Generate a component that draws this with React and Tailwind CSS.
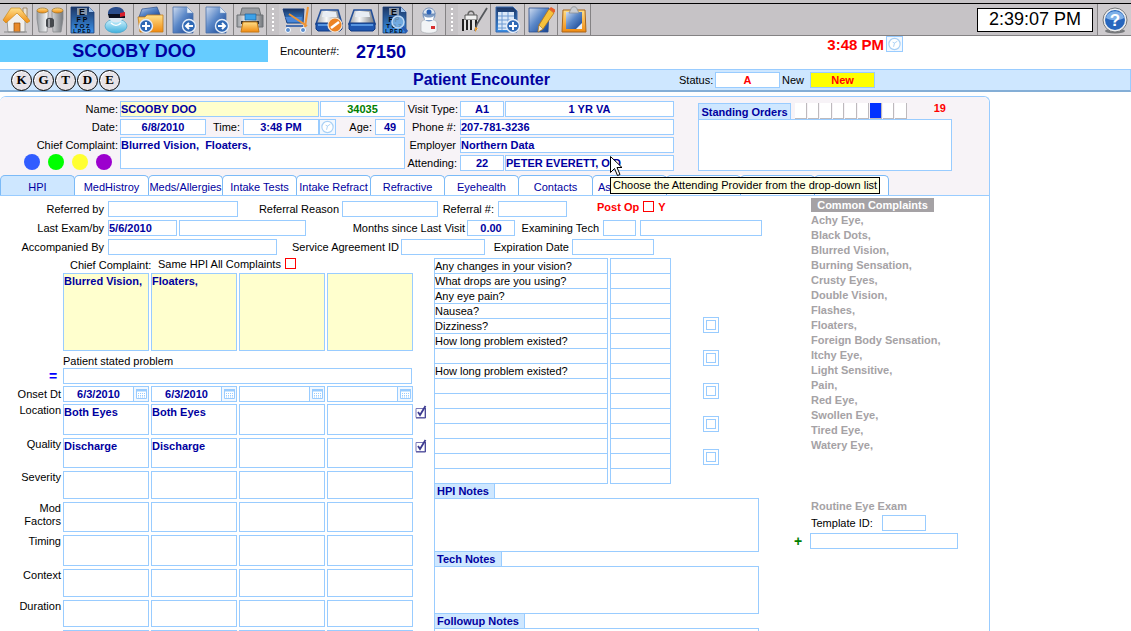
import { useState } from 'react';

const HISTORY_ROWS = [
  { label: 'Location', height: 'h-[31px]', values: ['Both Eyes', 'Both Eyes', '', ''], checked: true },
  { label: 'Quality', height: 'h-[30px]', values: ['Discharge', 'Discharge', '', ''], checked: true },
  { label: 'Severity', height: 'h-[28px]', values: ['', '', '', ''] },
  { label: 'Mod Factors', height: 'h-[30px]', values: ['', '', '', ''] },
  { label: 'Timing', height: 'h-[31px]', values: ['', '', '', ''] },
  { label: 'Context', height: 'h-[28px]', values: ['', '', '', ''] },
  { label: 'Duration', height: 'h-[27px]', values: ['', '', '', ''] },
  { label: '', height: 'h-[27px]', values: ['', '', '', ''] },
];

const QUESTIONS = [
  'Any changes in your vision?',
  'What drops are you using?',
  'Any eye pain?',
  'Nausea?',
  'Dizziness?',
  'How long problem existed?',
  '',
  'How long problem existed?',
  '', '', '', '', '', '', '',
];

const COMPLAINTS = [
  'Achy Eye,', 'Black Dots,', 'Blurred Vision,', 'Burning Sensation,', 'Crusty Eyes,',
  'Double Vision,', 'Flashes,', 'Floaters,', 'Foreign Body Sensation,', 'Itchy Eye,',
  'Light Sensitive,', 'Pain,', 'Red Eye,', 'Swollen Eye,', 'Tired Eye,', 'Watery Eye,',
];

const TABS = [
  'HPI', 'MedHistroy', 'Meds/Allergies', 'Intake Tests', 'Intake Refract', 'Refractive',
  'Eyehealth', 'Contacts', 'As', '', '', '',
];

const BOX = 'border border-[#99ccff] text-[11px] font-bold text-[#0000a0] outline-none';

/* ---------- form pieces ---------- */

function Field({ id, label, value = '', className = '' }) {
  return (
    <input
      id={id}
      aria-label={label}
      defaultValue={value}
      className={`${BOX} block h-4 min-w-0 shrink-0 ${className}`}
    />
  );
}

function Area({ id, label, value = '', className = '' }) {
  return (
    <textarea
      id={id}
      aria-label={label}
      defaultValue={value}
      className={`${BOX} block resize-none overflow-hidden leading-[14px] ${className}`}
    />
  );
}

function Label({ htmlFor, className = '', children }) {
  return (
    <label htmlFor={htmlFor} className={`block shrink-0 whitespace-nowrap leading-4 ${className}`}>
      {children}
    </label>
  );
}

/* ---------- icons ---------- */

function Gradients() {
  return (
    <svg className="absolute h-0 w-0" aria-hidden="true">
      <defs>
        <linearGradient id="blue" x1="0" y1="0" x2="1" y2="1">
          <stop offset="0" stopColor="#cfdcf0" />
          <stop offset="0.45" stopColor="#5b88c8" />
          <stop offset="1" stopColor="#12408f" />
        </linearGradient>
        <linearGradient id="navy" x1="0" y1="0" x2="0" y2="1">
          <stop offset="0" stopColor="#1c3563" />
          <stop offset="1" stopColor="#3a92ea" />
        </linearGradient>
        <linearGradient id="orange" x1="0" y1="0" x2="0" y2="1">
          <stop offset="0" stopColor="#ffe08a" />
          <stop offset="1" stopColor="#f08a10" />
        </linearGradient>
        <linearGradient id="steel" x1="0" y1="0" x2="1" y2="0">
          <stop offset="0" stopColor="#9a9ea3" />
          <stop offset="0.4" stopColor="#f8f9fa" />
          <stop offset="1" stopColor="#74787d" />
        </linearGradient>
        <linearGradient id="sky" x1="0" y1="0" x2="0" y2="1">
          <stop offset="0" stopColor="#d8f5ff" />
          <stop offset="1" stopColor="#3fb0dc" />
        </linearGradient>
      </defs>
    </svg>
  );
}

function Icon({ children }) {
  return (
    <svg viewBox="0 0 28 28" className="h-7 w-7 shrink-0" aria-hidden="true">
      {children}
    </svg>
  );
}

const Page = () => (
  <g>
    <path d="M4 1h14l6 6v20H4z" fill="url(#blue)" stroke="#4a6ea8" strokeWidth="0.8" />
    <path d="M18 1v6h6z" fill="#e4edf8" stroke="#7f9cc8" strokeWidth="0.5" />
  </g>
);

const Chart = () => (
  <g>
    <path d="M2 1h18l5 5v21H2z" fill="url(#navy)" stroke="#1b3d7a" strokeWidth="0.8" />
    <path d="M20 1v5h5z" fill="#9fc3ee" />
    <path d="M8 2h10v7H8z" fill="#8795a8" />
    <g fill="#03060f" fontFamily="Liberation Sans" fontWeight="bold" textAnchor="middle">
      <text x="13" y="9" fontSize="9">E</text>
      <text x="13" y="16" fontSize="7">F P</text>
      <text x="13" y="22" fontSize="6">T O Z</text>
      <text x="13" y="27" fontSize="5">L P E D</text>
    </g>
  </g>
);

const Badge = ({ children, x = 19, y = 19 }) => (
  <g transform={`translate(${x} ${y})`}>
    <circle r="6.5" fill="#2f69b5" stroke="#e6eef9" strokeWidth="1.4" />
    <g stroke="#fff" strokeWidth="2" fill="none">{children}</g>
  </g>
);

const Drive = () => (
  <g>
    <path d="M6 4h17l4 14H1z" fill="url(#steel)" stroke="#24509a" strokeWidth="1.6" />
    <path d="M8 6h13l1 5H7z" fill="#e8edf4" />
    <path d="M1 17h26v6l-2 2H3l-2-2z" fill="#1f57b0" stroke="#123a80" />
    <path d="M3 19h22" stroke="#69a8f0" strokeWidth="1.5" />
  </g>
);

const ICONS = {
  Home: (
    <Icon>
      <path d="M21 2h4v9h-4z" fill="#e9e2d8" stroke="#8a6b40" strokeWidth="0.7" />
      <path d="M5 13 14 5l9 9v12H6z" fill="#f1efec" stroke="#8b8b8b" strokeWidth="0.8" />
      <path d="M1 14 9 2h9l10 13-3 2L15 7 4 17z" fill="url(#orange)" stroke="#c98a1a" strokeWidth="0.7" />
      <path d="M12 17h6v9h-6z" fill="#e8892a" stroke="#8a4a10" strokeWidth="0.7" />
      <path d="M2 26h23" stroke="#8a8a8a" />
    </Icon>
  ),
  Search: (
    <Icon>
      <path d="M1 5h11v5l-1 16H3L1 13zM16 5h11v8l-2 13h-8l-1-16z" fill="url(#steel)" stroke="#85888c" strokeWidth="0.8" />
      <path d="M10 14c1-3 7-3 8 0v6c-1 2-7 2-8 0z" fill="#44484d" />
      <path d="M13 13v8" stroke="#b8bbc0" strokeWidth="1.5" />
      <ellipse cx="6.5" cy="4.5" rx="5.500" ry="2.500" fill="url(#orange)" stroke="#9c7125" strokeWidth="0.7" />
      <ellipse cx="21.5" cy="4.5" rx="5.500" ry="2.500" fill="url(#orange)" stroke="#9c7125" strokeWidth="0.7" />
    </Icon>
  ),
  'Eye chart': <Icon><Chart /></Icon>,
  Patient: (
    <Icon>
      <ellipse cx="14" cy="20" rx="11" ry="7" fill="url(#sky)" stroke="#4aa3c8" strokeWidth="0.7" />
      <circle cx="14" cy="9" r="7.500" fill="#dce8f2" />
      <path d="M6 9c-1-7 5-8 9-8s8 3 7 7z" fill="#2a4d8c" />
      <path d="M6 8h17v4H7z" fill="#0b1020" />
      <path d="m18 7 5-1v4l-5 1z" fill="#d81e2c" />
      <path d="M9 17c3 3 7 3 10 0" stroke="#fff" strokeWidth="1.5" fill="none" />
    </Icon>
  ),
  'New file': (
    <Icon>
      <path d="m6 3 15-2 4 10H3z" fill="url(#blue)" stroke="#2b4f8e" strokeWidth="0.7" />
      <path d="M2 11h7l2-2h16v17H4z" fill="url(#orange)" stroke="#c47b18" strokeWidth="0.8" />
      <Badge x={10} y={20}><path d="M-4 0h8M0-4v8" /></Badge>
    </Icon>
  ),
  Previous: <Icon><Page /><Badge x={20} y={20}><path d="M4 0h-7M0-3-3 0 0 3" /></Badge></Icon>,
  Next: <Icon><Page /><Badge x={20} y={20}><path d="M-4 0h7M0-3 3 0 0 3" /></Badge></Icon>,
  Print: (
    <Icon>
      <path d="M6 2h17l2 8H4z" fill="#9a9da2" stroke="#6e7175" />
      <path d="M1 9h26v12H1z" fill="url(#steel)" stroke="#6d7074" />
      <path d="M9 8h11v6H9z" fill="#3da2e8" stroke="#1c5f9c" strokeWidth="0.7" />
      <path d="M5 15h18v3H5z" fill="#33363a" />
      <path d="M7 16h14l2 10H5z" fill="url(#orange)" stroke="#c47b18" />
    </Icon>
  ),
  Cart: (
    <Icon>
      <path d="M2 3h21l-1 14H6z" fill="url(#navy)" stroke="#1d3e7c" />
      <path d="M4 11h17l-1 5H7z" fill="#4a86d8" />
      <path d="m8 8 18 12M27 1l-3 20" stroke="#ef9433" strokeWidth="2" />
      <path d="M5 20h17" stroke="#4a6fae" strokeWidth="2" />
      <circle cx="7" cy="24" r="2.500" fill="#5c8fd0" stroke="#fff" />
      <circle cx="22" cy="24" r="2.500" fill="#5c8fd0" stroke="#fff" />
    </Icon>
  ),
  'Clear disk': (
    <Icon>
      <Drive />
      <circle cx="20" cy="19" r="7" fill="#ec8324" stroke="#f6e7d4" strokeWidth="1.2" />
      <path d="m16 22 8-6" stroke="#fff" strokeWidth="2.500" />
    </Icon>
  ),
  Disk: <Icon><Drive /></Icon>,
  'Search chart': (
    <Icon>
      <Chart />
      <path d="m21 20 5 6" stroke="#2a5bb0" strokeWidth="3" />
      <circle cx="17" cy="16" r="6" fill="#8fc4f4" fillOpacity="0.7" stroke="#bcd8f5" strokeWidth="1.5" />
    </Icon>
  ),
  Doctor: (
    <Icon>
      <path d="M6 17c0-5 16-5 16 0v8c-3 3-13 3-16 0z" fill="#f2f4f6" stroke="#a9adb3" strokeWidth="0.7" />
      <circle cx="14" cy="9" r="6.500" fill="#7f9cc4" />
      <path d="M8 8c0-8 12-8 12 0z" fill="#dfe7f0" stroke="#5577aa" strokeWidth="0.7" />
      <circle cx="14" cy="6" r="2.500" fill="#2a62b8" />
      <path d="M9 10c3 2 7 2 10 0l-1 4h-8z" fill="#fff" />
      <path d="M16 20h4v3h-4z" fill="#d83030" />
    </Icon>
  ),
  Tools: (
    <Icon>
      <path d="M5 9h12v5H5z" fill="#f2f2f2" stroke="#555" />
      <path d="M8 9c0-5 6-5 6 0" fill="none" stroke="#666" strokeWidth="1.5" />
      <path d="M3 14h15v10H3z" fill="#e2e2e2" />
      <path d="M3 13v12M7 14v10M11 14v10M16 14v10" stroke="#222" strokeWidth="2" />
      <path d="M27 2 17 18l-2 7" stroke="#55585c" strokeWidth="1.800" fill="none" />
      <path d="m15 21 3 1-3 4z" fill="#f0a030" />
    </Icon>
  ),
  'New sheet': (
    <Icon>
      <path d="M3 1h17l4 4v21H3z" fill="url(#navy)" stroke="#3668ae" />
      <path d="M5 6h16v18H5z" fill="#dbe9f8" />
      <path d="M5 10h16M5 14h16M5 18h16M5 22h16M9 6v18M15 6v18" stroke="#6d9ad2" />
      <Badge x={20} y={20}><path d="M-4 0h8M0-4v8" /></Badge>
    </Icon>
  ),
  'Edit note': (
    <Icon>
      <path d="M2 2h20l-1 24H2z" fill="url(#blue)" stroke="#2b4f8e" strokeWidth="0.8" />
      <path d="m22 3 5 4-11 16-5 3 1-7z" fill="#f7c23c" stroke="#b97512" strokeWidth="0.8" />
      <path d="m22 3 2-2 5 3-2 3z" fill="#e8602c" />
      <path d="m12 19 4 4-5 3z" fill="#f6ead0" stroke="#8a6020" strokeWidth="0.5" />
    </Icon>
  ),
  Clipboard: (
    <Icon>
      <path d="M3 4h22l1 22H2z" fill="url(#orange)" stroke="#a9651a" />
      <path d="M6 6h16v17H6z" fill="url(#blue)" />
      <path d="m16 23 6-6v6z" fill="#e8f1fb" />
      <path d="M11 3c0-3 6-3 6 0l2 4H9z" fill="#c9ccd1" stroke="#8c9096" strokeWidth="0.8" />
    </Icon>
  ),
};

const TOOL_GROUPS = [
  { width: 'w-[267px] grid-cols-8', names: ['Home', 'Search', 'Eye chart', 'Patient', 'New file', 'Previous', 'Next', 'Print'] },
  { width: 'w-[167px] grid-cols-5', names: ['Cart', 'Clear disk', 'Disk', 'Search chart', 'Doctor'] },
  { width: 'w-[133px] grid-cols-4', names: ['Tools', 'New sheet', 'Edit note', 'Clipboard'] },
];

function ClockIcon() {
  return (
    <svg viewBox="0 0 16 16" className="h-4 w-4" aria-hidden="true">
      <circle cx="8" cy="8" r="6" fill="#fff" stroke="#a9d0f5" strokeWidth="1.2" />
      <path d="m7 11 1-4 3-2M8 7 6 6" fill="none" stroke="#a9d0f5" />
    </svg>
  );
}

function ClockButton({ label }) {
  return (
    <button
      type="button"
      aria-label={label}
      className="flex h-4 w-[17px] shrink-0 items-center justify-center border border-[#99ccff] bg-[#f2f8ff]"
    >
      <ClockIcon />
    </button>
  );
}

function CalendarIcon() {
  return (
    <svg viewBox="0 0 11 10" className="h-[10px] w-[11px]" aria-hidden="true">
      <path d="M0.500 0.500h10v9h-10z" fill="#fff" stroke="#99ccff" />
      <path d="M0 0h11v2.500H0z" fill="#99ccff" />
      <path d="M2 4.500h7M2 6.500h7M2 8h7" stroke="#99ccff" strokeDasharray="1 1" />
    </svg>
  );
}

function TickIcon() {
  return (
    <svg viewBox="0 0 12 14" className="h-[14px] w-3" aria-hidden="true">
      <path d="M1 3.500h9v9H1z" fill="#fff" stroke="#7a78b8" />
      <path d="M10.500 3v10H1" fill="none" stroke="#4c4a98" />
      <path d="m3 7 2 3 5.500-9" fill="none" stroke="#3c3a90" strokeWidth="1.800" />
    </svg>
  );
}

/* ---------- sections ---------- */

function Toolbar() {
  return (
    <header className="border-t-3 border-[#c6c3c6] bg-[#c6c3c6]">
      <div className="flex h-[33px] items-stretch border-t border-b border-t-black border-b-[#848284]">
        {TOOL_GROUPS.map((group, i) => (
          <div key={group.width} className="flex">
            {i > 0 && (
              <div className="flex w-3 justify-center py-1">
                <span className="border-l-2 border-dotted border-white" />
              </div>
            )}
            <div className={`grid ${group.width}`}>
              {group.names.map((name) => (
                <button
                  key={name}
                  type="button"
                  aria-label={name}
                  className="flex items-center justify-center overflow-hidden border-r border-[#848284] bg-[#cecbce]"
                >
                  {ICONS[name]}
                </button>
              ))}
            </div>
          </div>
        ))}
        <div className="flex flex-1 items-center justify-end pr-1">
          <time className="flex h-6 w-[116px] items-center justify-center border border-black bg-white text-[18px] text-black">
            2:39:07 PM
          </time>
        </div>
        <button
          type="button"
          aria-label="Help"
          className="flex w-[34px] items-center justify-center border-l border-[#848284] bg-[#cecbce]"
        >
          <Icon>
            <ellipse cx="14" cy="25" rx="10" ry="2.500" fill="#77797c" />
            <circle cx="14" cy="14" r="12" fill="#eceef0" stroke="#77797c" />
            <circle cx="14" cy="14" r="10" fill="#2766bd" />
            <path d="M5 12c1-9 17-9 18 0-5 3-13 3-18 0z" fill="#7fb0e8" />
            <text x="14" y="20" fontSize="17" fontWeight="bold" fill="#fff" textAnchor="middle" fontFamily="Liberation Sans">?</text>
          </Icon>
        </button>
      </div>
    </header>
  );
}

function PatientStrip() {
  return (
    <div className="flex h-[33px] items-start">
      <h1 className="mt-1 h-[22px] w-[268px] bg-[#66ccff] text-center text-[18px] leading-[22px] font-bold text-[#0000a0]">
        SCOOBY DOO
      </h1>
      <span className="mt-1 w-[88px] pl-3 leading-[22px]">Encounter#:</span>
      <span className="mt-1 text-[18px] leading-6 font-bold text-[#0000a0]">27150</span>
      <div className="flex flex-1 justify-end pr-[228px]">
        <span className="pr-[2px] text-[15px] leading-[18px] font-bold text-[#ff0000]">3:48 PM</span>
        <ClockButton label="Set time" />
      </div>
    </div>
  );
}

function EncounterBar() {
  return (
    <div className="flex h-[23px] items-center border-t border-r border-b-2 border-[#99ccff] border-b-[#84aed6] bg-[#cee7ff]">
      <div className="flex w-[413px] gap-px pl-[11px]">
        {['K', 'G', 'T', 'D', 'E'].map((letter) => (
          <button
            key={letter}
            type="button"
            className="h-[21px] w-[21px] rounded-full border border-black bg-[#e7e3e7] font-['Liberation_Serif',serif] text-[13px] leading-[18px] font-bold text-black shadow-[inset_1px_1px_1px_#fff]"
          >
            {letter}
          </button>
        ))}
      </div>
      <h2 className="w-[266px] text-[16px] leading-5 font-bold text-[#0000a0]">Patient Encounter</h2>
      <Label htmlFor="status" className="w-9">Status:</Label>
      <Field id="status" value="A" className="w-[65px] bg-white text-center text-[#ff0000]" />
      <Label htmlFor="status-new" className="w-[30px] pl-[2px]">New</Label>
      <Field id="status-new" value="New" className="w-[65px] bg-[#ffff00] text-center text-[#ff0000]" />
    </div>
  );
}

function Tooltip() {
  return (
    <>
      <div
        role="tooltip"
        className="absolute top-[22px] left-[105px] z-10 border border-black bg-[#ffffe1] px-[2px] leading-[15px] whitespace-nowrap text-black"
      >
        Choose the Attending Provider from the drop-down list
      </div>
      <svg viewBox="0 0 12 21" className="absolute top-px left-[105px] z-20 h-[21px] w-3" aria-hidden="true">
        <path d="M0.500 0.500v16l4-4 3 7 2.500-1-3-7h5z" fill="#fff" stroke="#000" />
      </svg>
    </>
  );
}

function PatientPanel() {
  return (
    <div className="flex px-0 pt-1 pb-1">
      <div className="w-[405px] shrink-0">
        <div className="flex flex-col gap-[2px]">
          <div className="flex">
            <Label htmlFor="name" className="w-[120px] pr-[2px] text-right">Name:</Label>
            <Field id="name" value="SCOOBY DOO" className="mr-px w-[199px] bg-[#ffffcc]" />
            <Field label="Patient number" value="34035" className="w-[85px] bg-white text-center text-[#008000]" />
          </div>
          <div className="flex">
            <Label htmlFor="date" className="w-[120px] pr-[2px] text-right">Date:</Label>
            <Field id="date" value="6/8/2010" className="w-[86px] bg-white text-center" />
            <Label htmlFor="time" className="w-[37px] pr-[3px] text-right">Time:</Label>
            <Field id="time" value="3:48 PM" className="w-[76px] bg-white text-center" />
            <ClockButton label="Pick visit time" />
            <Label htmlFor="age" className="w-[39px] pr-[3px] text-right">Age:</Label>
            <Field id="age" value="49" className="w-[30px] bg-white text-center" />
          </div>
          <div className="flex">
            <div className="w-[120px]">
              <Label htmlFor="chief" className="pr-[2px] text-right">Chief Complaint:</Label>
              <div className="flex gap-2 pt-px pl-6">
                <span className="h-4 w-4 rounded-full bg-[#315dff]" />
                <span className="h-4 w-4 rounded-full bg-[#00ff00]" />
                <span className="h-4 w-4 rounded-full bg-[#ffff31]" />
                <span className="h-4 w-4 rounded-full bg-[#9c00ce]" />
              </div>
            </div>
            <Area id="chief" value="Blurred Vision,  Floaters," className="h-8 w-[285px] bg-white" />
          </div>
        </div>
      </div>

      <div className="flex w-[269px] shrink-0 flex-col gap-[2px]">
        <div className="flex">
          <Label htmlFor="visit" className="w-[55px] pr-[2px] text-right">Visit Type:</Label>
          <Field id="visit" value="A1" className="mr-px w-11 bg-white text-center" />
          <Field label="Visit description" value="1 YR VA" className="w-[169px] bg-white text-center" />
        </div>
        <div className="flex">
          <Label htmlFor="phone" className="w-[55px] pr-[4px] text-right">Phone #:</Label>
          <Field id="phone" value="207-781-3236" className="w-[214px] bg-white" />
        </div>
        <div className="flex">
          <Label htmlFor="employer" className="w-[55px] pr-[4px] text-right">Employer</Label>
          <Field id="employer" value="Northern Data" className="w-[214px] bg-white" />
        </div>
        <div className="flex">
          <Label htmlFor="attending" className="w-[55px] pr-[3px] text-right">Attending:</Label>
          <Field id="attending" value="22" className="mr-px w-11 bg-white text-center" />
          <div className="relative">
            <Field label="Attending provider" value="PETER EVERETT, O.D" className="w-[169px] bg-white" />
            <Tooltip />
          </div>
        </div>
      </div>

      <div className="ml-6 w-[254px] pt-[2px]">
        <div className="flex h-4">
          <label
            htmlFor="orders"
            className="mr-1 w-[93px] border border-b-0 border-[#99ccff] bg-[#cee7ff] text-center leading-4 font-bold whitespace-nowrap text-[#0000a0]"
          >
            Standing Orders
          </label>
          <div className="grid w-[113px] grid-cols-9">
            {[0, 1, 2, 3, 4, 5, 6, 7, 8].map((n) => (
              <button
                key={n}
                type="button"
                aria-label={`Order ${n + 1}`}
                className={`mr-px border-r border-b border-[#bdbabd] ${n === 6 ? 'bg-[#0031ff]' : 'bg-white'}`}
              />
            ))}
          </div>
          <span className="flex-1 pr-[6px] text-right leading-[11px] font-bold text-[#ff0000]">19</span>
        </div>
        <Area id="orders" className="h-[52px] w-full bg-white" />
      </div>
    </div>
  );
}

function Tabs() {
  const [active, setActive] = useState(0);
  return (
    <div role="tablist" className="flex h-[21px] border-b border-[#99ccff]">
      {TABS.map((tab, i) => (
        <button
          key={i}
          type="button"
          role="tab"
          aria-selected={i === active}
          onClick={() => setActive(i)}
          className={`-mr-px w-[75px] shrink-0 overflow-hidden rounded-t-[5px] border border-b-0 border-[#7bbaf7] pt-[3px] text-center leading-4 whitespace-nowrap text-[#0000a0] ${
            i === active ? 'bg-[#cee7ff]' : 'bg-white'
          } ${i === 8 ? 'pl-[5px] text-left' : ''}`}
        >
          {tab}
        </button>
      ))}
    </div>
  );
}

function VisitFields() {
  return (
    <div className="flex flex-col gap-[3px] pt-[5px]">
      <div className="flex">
        <Label htmlFor="referred" className="w-[108px] pr-1 text-right">Referred by</Label>
        <Field id="referred" className="w-[130px]" />
        <Label htmlFor="reason" className="w-[104px] pr-[3px] text-right">Referral Reason</Label>
        <Field id="reason" className="w-24" />
        <Label htmlFor="referral" className="w-[60px] pr-1 text-right">Referral #:</Label>
        <Field id="referral" className="w-[69px]" />
        <label className="flex items-start pl-[30px] leading-3 font-bold text-[#ff0000]">
          Post Op
          <input type="checkbox" className="mx-1 h-[11px] w-[11px] appearance-none border border-[#ff0000] bg-white" />
          Y
        </label>
      </div>
      <div className="flex">
        <Label htmlFor="last" className="w-[108px] pr-1 text-right">Last Exam/by</Label>
        <Field id="last" value="5/6/2010" className="mr-[2px] w-[69px]" />
        <Field label="Last exam by" className="w-[127px]" />
        <Label htmlFor="months" className="w-[161px] pr-[2px] text-right">Months since Last Visit</Label>
        <Field id="months" value="0.00" className="w-12 text-center" />
        <Label htmlFor="tech" className="w-[88px] pr-1 text-right">Examining Tech</Label>
        <Field id="tech" className="mr-1 w-[33px]" />
        <Field label="Examining tech name" className="w-[122px]" />
      </div>
      <div className="flex">
        <Label htmlFor="accompanied" className="w-[108px] pr-1 text-right">Accompanied By</Label>
        <Field id="accompanied" className="w-[169px]" />
        <Label htmlFor="agreement" className="w-[124px] pr-[2px] text-right">Service Agreement ID</Label>
        <Field id="agreement" className="w-[84px]" />
        <Label htmlFor="expiration" className="w-[87px] pr-[3px] text-right">Expiration Date</Label>
        <Field id="expiration" className="w-[82px]" />
      </div>
    </div>
  );
}

function HistoryGrid() {
  const complaints = ['Blurred Vision,', 'Floaters,', '', ''];
  const onset = ['6/3/2010', '6/3/2010', '', ''];
  return (
    <div className="w-[432px] shrink-0">
      <div className="flex h-[15px] pl-[70px]">
        <span className="w-[88px] leading-[15px]">Chief Complaint:</span>
        <label className="flex w-[138px] items-start justify-between leading-[13px] whitespace-nowrap">
          Same HPI All Complaints
          <input type="checkbox" className="h-[11px] w-[11px] shrink-0 appearance-none border border-[#ff0000] bg-white" />
        </label>
      </div>
      <div className="grid grid-cols-[61px_repeat(4,86px)_12px] gap-x-[2px]">
        <span />
        {complaints.map((text, i) => (
          <Area key={i} label={`Complaint ${i + 1}`} value={text} className="h-[78px] bg-[#ffffce] whitespace-nowrap" />
        ))}
      </div>
      <label htmlFor="stated" className="block h-[17px] pl-[63px] leading-[20px]">Patient stated problem</label>
      <div className="flex pl-[49px]">
        <button type="button" aria-label="Copy problem" className="w-[14px] text-left text-[14px] leading-4 font-bold text-[#0000ff]">=</button>
        <Field id="stated" className="w-[349px]" />
      </div>
      <div className="mt-[2px] grid grid-cols-[61px_repeat(4,86px)_12px] gap-x-[2px]">
        <span className="text-right leading-4">Onset Dt</span>
        {onset.map((text, i) => (
          <div key={i} className="flex">
            <Field label={`Onset date ${i + 1}`} value={text} className="w-[70px] border-r-0 text-center" />
            <button
              type="button"
              aria-label="Pick date"
              className="flex h-4 w-4 items-center justify-center border border-[#99ccff] bg-[#f2f8ff]"
            >
              <CalendarIcon />
            </button>
          </div>
        ))}
      </div>
      <div className="mt-[2px] flex flex-col gap-[3px]">
        {HISTORY_ROWS.map((row, r) => (
          <div key={r} className="grid grid-cols-[61px_repeat(4,86px)_12px] gap-x-[2px]">
            <span className="pl-4 text-right leading-[13px]">{row.label}</span>
            {row.values.map((text, i) => (
              <Area key={i} label={`${row.label} ${i + 1}`} value={text} className={row.height} />
            ))}
            {row.checked && (
              <button type="button" aria-label={`${row.label} done`} className="self-start pt-px">
                <TickIcon />
              </button>
            )}
          </div>
        ))}
      </div>
    </div>
  );
}

function Notes({ id, title, width, height }) {
  return (
    <div className="ml-[2px] w-[325px]">
      <label
        htmlFor={id}
        className={`block h-[14px] border-x border-[#99ccff] bg-[#cee7ff] pl-[2px] leading-[15px] font-bold text-[#0000a0] ${width}`}
      >
        {title}
      </label>
      <Area id={id} className={`w-full ${height}`} />
    </div>
  );
}

function Questions() {
  return (
    <div className="flex-1">
      <div className="flex gap-[30px]">
        <table className="border-separate border-spacing-x-[2px] border-spacing-y-0">
          <tbody>
            {QUESTIONS.map((question, i) => (
              <tr key={i}>
                <td
                  className={`h-[15px] w-[174px] border-x border-b border-[#99ccff] p-0 leading-[14px] ${i === 0 ? 'border-t' : ''}`}
                >
                  {question}
                </td>
                <td className={`h-[15px] w-[61px] border-x border-b border-[#99ccff] p-0 ${i === 0 ? 'border-t' : ''}`}>
                  <input
                    aria-label={question || `Answer ${i + 1}`}
                    className="block h-[14px] w-[59px] text-[11px] outline-none"
                  />
                </td>
              </tr>
            ))}
          </tbody>
        </table>
        <div className="flex flex-col gap-[17px] pt-[59px]">
          {[1, 2, 3, 4, 5].map((n) => (
            <label key={n} className="flex h-4 w-4 items-center justify-center border border-[#99ccff]">
              <input
                type="checkbox"
                aria-label={`Question group ${n}`}
                className="h-[10px] w-[10px] appearance-none border border-[#99ccff] bg-white checked:bg-[#99ccff]"
              />
            </label>
          ))}
        </div>
      </div>
      <Notes id="hpi-notes" title="HPI Notes" width="w-[61px]" height="h-[54px]" />
      <Notes id="tech-notes" title="Tech Notes" width="w-[68px]" height="h-12" />
      <Notes id="followup-notes" title="Followup Notes" width="w-[91px]" height="h-12" />
    </div>
  );
}

function CommonComplaints() {
  return (
    <aside className="w-[195px] shrink-0 pt-[2px]">
      <div className="pl-[17px] font-bold text-[#a5a2a5]">
        <h3 className="mb-px w-[123px] bg-[#a5a2a5] text-center leading-[14px] whitespace-nowrap text-white">
          Common Complaints
        </h3>
        <ul>
          {COMPLAINTS.map((item) => (
            <li key={item}>
              <button type="button" className="block leading-[15px]">{item}</button>
            </li>
          ))}
        </ul>
        <p className="mt-[45px] leading-[17px]">Routine Eye Exam</p>
      </div>
      <div className="flex pl-[17px]">
        <Label htmlFor="template" className="w-[71px]">Template ID:</Label>
        <Field id="template" className="w-11" />
      </div>
      <div className="mt-[2px] flex">
        <button type="button" aria-label="Add template" className="w-4 text-left text-[14px] leading-4 font-bold text-[#008000]">+</button>
        <Field label="Template name" className="w-[148px]" />
      </div>
    </aside>
  );
}

export default function App() {
  return (
    <div className="h-screen overflow-hidden bg-white font-['Liberation_Sans',Arial,sans-serif] text-[11px] text-black">
      <Gradients />
      <Toolbar />
      <PatientStrip />
      <EncounterBar />
      <main className="mt-1 mr-[141px] min-h-screen rounded-t-[6px] border-t border-r border-[#99ccff] bg-white">
        <section className="rounded-t-[6px] bg-[#f7f3f7]">
          <PatientPanel />
          <Tabs />
        </section>
        <section className="flex">
          <div className="flex-1">
            <VisitFields />
            <div className="flex pt-[3px]">
              <HistoryGrid />
              <Questions />
            </div>
          </div>
          <CommonComplaints />
        </section>
      </main>
    </div>
  );
}
